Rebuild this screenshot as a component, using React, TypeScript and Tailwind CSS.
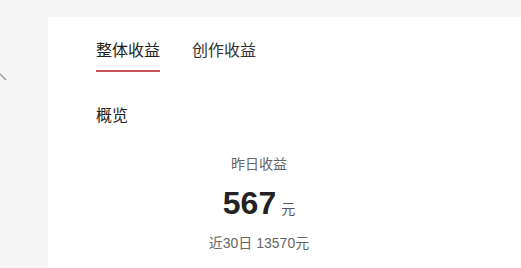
import React from 'react';

const App: React.FC = () => {
  return (
    <div
      className="flex h-[268px] w-full overflow-hidden bg-[#f5f5f5] pt-[17px]"
      style={{ fontFamily: '"Liberation Sans", "Noto Sans CJK SC", sans-serif' }}
    >
      <aside className="w-[48px] shrink-0 overflow-hidden pt-[55px]">
        <svg width="16" height="10" viewBox="0 0 16 10" className="-ml-[8px]" fill="none">
          <path d="M2 8 L8 2 L14 8" stroke="#8a8a8a" strokeWidth="1.2" />
        </svg>
      </aside>

      <main className="flex-1 bg-white pl-[48px] pt-[22px]">
        <nav className="flex gap-[32px] text-[16px] leading-[24px]">
          <button className="border-b-2 border-[#c9545a] pb-[7px] text-[#222]">整体收益</button>
          <button className="border-b-2 border-transparent pb-[7px] text-[#333]">创作收益</button>
        </nav>

        <h2 className="mt-[32px] text-[16px] leading-[24px] text-[#222]">概览</h2>

        <section className="mt-[26px] flex w-[326px] flex-col items-center">
          <div className="text-[14px] leading-[20px] text-[#666]">昨日收益</div>
          <div className="mt-[9px] flex items-baseline gap-[5px]">
            <span className="text-[32px] font-bold leading-[40px] text-[#222]">567</span>
            <span className="text-[14px] text-[#555]">元</span>
          </div>
          <div className="mt-[10px] text-[14px] leading-[20px] text-[#666]">近30日 13570元</div>
        </section>
      </main>
    </div>
  );
};

export default App;
